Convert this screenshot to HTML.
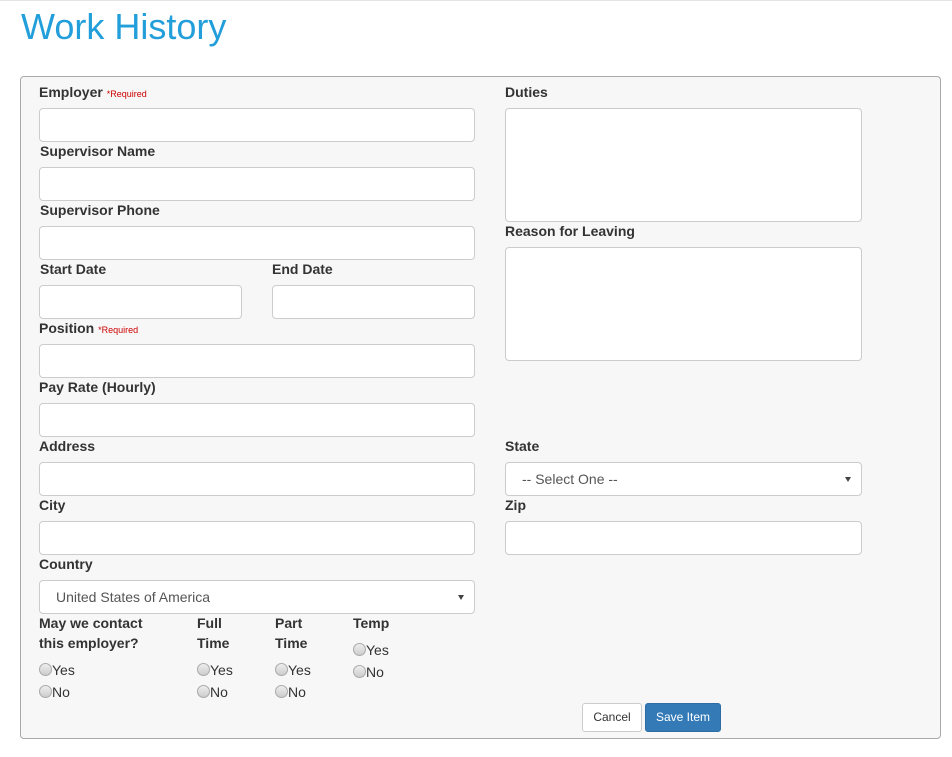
<!DOCTYPE html>
<html><head><meta charset="utf-8"><style>
*{box-sizing:border-box;margin:0;padding:0}
body{width:952px;height:757px;background:#fff;font-family:"Liberation Sans",Arial,sans-serif;color:#333;position:relative;overflow:hidden}
.top{position:absolute;left:0;top:0;width:952px;height:1px;background:#e5e5e5}
h1{position:absolute;left:21px;top:7px;font-size:36px;font-weight:normal;color:#229fda;line-height:40px}
.panel{position:absolute;left:20px;top:76px;width:921px;height:663px;background:#f7f7f7;border:1px solid #a9a9a9;border-radius:4px}
.l{position:absolute;font-size:14px;font-weight:bold;line-height:20px;color:#333}
.req{color:#c00;font-size:9px;font-weight:normal}
.i{position:absolute;height:34px;background:#fff;border:1px solid #ccc;border-radius:4px}
.s{font-size:14px;color:#555;padding:8px 0 0 16px;line-height:16px}
.s:after{content:"";position:absolute;right:10px;top:14px;border-left:3px solid transparent;border-right:3px solid transparent;border-top:5px solid #444}
.r{position:absolute;font-size:14px;line-height:16px;color:#333;padding-left:13px}
.r:before{content:"";position:absolute;left:0;top:1px;width:11px;height:11px;border-radius:50%;border:1px solid #aaa;background:linear-gradient(#eee,#ccc)}
.btn{position:absolute;height:29px;border-radius:3px;font-size:12px;line-height:27px;text-align:center}
</style></head><body>
<div class="top"></div>
<h1>Work History</h1>
<div class="panel"></div>
<div class="l" style="left:39px;top:82px">Employer <span class="req">*Required</span></div>
<div class="i" style="left:39px;top:108px;width:436px"></div>
<div class="l" style="left:40px;top:141px">Supervisor Name</div>
<div class="i" style="left:39px;top:167px;width:436px"></div>
<div class="l" style="left:40px;top:200px">Supervisor Phone</div>
<div class="i" style="left:39px;top:226px;width:436px"></div>
<div class="l" style="left:40px;top:259px">Start Date</div>
<div class="i" style="left:39px;top:285px;width:203px"></div>
<div class="l" style="left:272px;top:259px">End Date</div>
<div class="i" style="left:272px;top:285px;width:203px"></div>
<div class="l" style="left:39px;top:318px">Position <span class="req">*Required</span></div>
<div class="i" style="left:39px;top:344px;width:436px"></div>
<div class="l" style="left:39px;top:377px">Pay Rate (Hourly)</div>
<div class="i" style="left:39px;top:403px;width:436px"></div>
<div class="l" style="left:39px;top:436px">Address</div>
<div class="i" style="left:39px;top:462px;width:436px"></div>
<div class="l" style="left:39px;top:495px">City</div>
<div class="i" style="left:39px;top:521px;width:436px"></div>
<div class="l" style="left:39px;top:554px">Country</div>
<div class="i s" style="left:39px;top:580px;width:436px">United States of America</div>

<div class="l" style="left:505px;top:82px">Duties</div>
<div class="i" style="left:505px;top:108px;width:357px;height:114px"></div>
<div class="l" style="left:505px;top:221px">Reason for Leaving</div>
<div class="i" style="left:505px;top:247px;width:357px;height:114px"></div>
<div class="l" style="left:505px;top:436px">State</div>
<div class="i s" style="left:505px;top:462px;width:357px">-- Select One --</div>
<div class="l" style="left:505px;top:495px">Zip</div>
<div class="i" style="left:505px;top:521px;width:357px"></div>

<div class="l" style="left:39px;top:613px">May we contact<br>this employer?</div>
<div class="l" style="left:197px;top:613px">Full<br>Time</div>
<div class="l" style="left:275px;top:613px">Part<br>Time</div>
<div class="l" style="left:353px;top:613px">Temp</div>
<div class="r" style="left:39px;top:662px">Yes</div><div class="r" style="left:39px;top:684px">No</div>
<div class="r" style="left:197px;top:662px">Yes</div><div class="r" style="left:197px;top:684px">No</div>
<div class="r" style="left:275px;top:662px">Yes</div><div class="r" style="left:275px;top:684px">No</div>
<div class="r" style="left:353px;top:642px">Yes</div><div class="r" style="left:353px;top:664px">No</div>

<div class="btn" style="left:582px;top:703px;width:60px;background:#fff;border:1px solid #ccc;color:#333">Cancel</div>
<div class="btn" style="left:645px;top:703px;width:76px;background:#337ab7;border:1px solid #2e6da4;color:#fff">Save Item</div>
</body></html>
